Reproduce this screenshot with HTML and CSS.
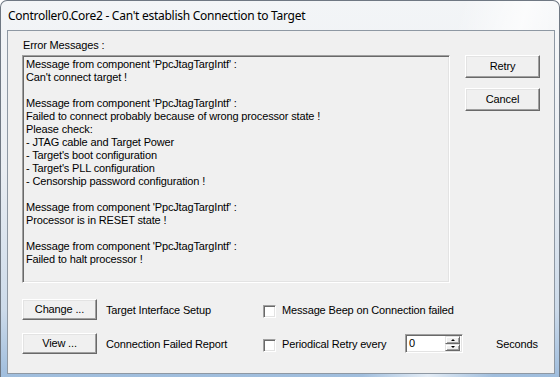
FILE: index.html
```html
<!DOCTYPE html>
<html>
<head>
<meta charset="utf-8">
<link rel="stylesheet" href="styles.css">
</head>
<body>
<div class="window">
  <div class="titlebar">Controller0.Core2 - Can't establish Connection to Target</div>
  <div class="client">
    <div class="top">
      <div class="msgcol">
        <div class="label">Error Messages :</div>
        <div class="msgbox">
          <div class="line">Message from component 'PpcJtagTargIntf' :</div>
          <div class="line">Can't connect target !</div>
          <div class="line">&nbsp;</div>
          <div class="line">Message from component 'PpcJtagTargIntf' :</div>
          <div class="line">Failed to connect probably because of wrong processor state !</div>
          <div class="line">Please check:</div>
          <div class="line">- JTAG cable and Target Power</div>
          <div class="line">- Target's boot configuration</div>
          <div class="line">- Target's PLL configuration</div>
          <div class="line">- Censorship password configuration !</div>
          <div class="line">&nbsp;</div>
          <div class="line">Message from component 'PpcJtagTargIntf' :</div>
          <div class="line">Processor is in RESET state !</div>
          <div class="line">&nbsp;</div>
          <div class="line">Message from component 'PpcJtagTargIntf' :</div>
          <div class="line">Failed to halt processor !</div>
        </div>
      </div>
      <div class="btncol">
        <div class="btn btn-main">Retry</div>
        <div class="btn btn-main">Cancel</div>
      </div>
    </div>
    <div class="opts">
      <div class="btn btn-small">Change ...</div>
      <div class="opt-label">Target Interface Setup</div>
      <div class="check"></div>
      <div class="opt-label">Message Beep on Connection failed</div>
      <div></div>
      <div></div>

      <div class="btn btn-small">View ...</div>
      <div class="opt-label">Connection Failed Report</div>
      <div class="check"></div>
      <div class="opt-label">Periodical Retry every</div>
      <div class="spin">
        <div class="spin-edit">0</div>
        <div class="spin-btns">
          <div class="spin-btn"><span class="arr-up"></span></div>
          <div class="spin-btn"><span class="arr-down"></span></div>
        </div>
      </div>
      <div class="opt-label seconds">Seconds</div>
    </div>
  </div>
</div>
</body>
</html>
```

FILE: styles.css
```css
html, body {
  margin: 0;
  padding: 0;
  width: 560px;
  height: 377px;
  overflow: hidden;
  background: #ffffff;
}

.window {
  box-sizing: border-box;
  width: 560px;
  height: 377px;
  border: 1px solid #6f7883;
  border-bottom: none;
  border-radius: 7px 7px 0 0;
  padding: 0 4px 0 6px;
  background:
    linear-gradient(105deg, rgba(255,255,255,0) 70%, rgba(255,255,255,0.7) 80%, rgba(255,255,255,0) 90%),
    linear-gradient(to bottom, #f3f5f7 0%, #e9edf2 45%, #cddbea 82%, #9fbddd 100%);
  display: flex;
  flex-direction: column;
}

.titlebar {
  height: 29px;
  box-sizing: border-box;
  padding: 7px 0 0 1px;
  font-family: "Noto Sans", "Open Sans", sans-serif;
  font-size: 12px;
  line-height: 16px;
  letter-spacing: -0.27px;
  color: #000;
  white-space: nowrap;
}

.client {
  box-sizing: border-box;
  width: 548px;
  height: 344px;
  border: 1px solid #8e98a3;
  background: #f0f0f0;
  padding: 8px 0 0 14px;
  font-family: "Liberation Sans", Arial, sans-serif;
  font-size: 11px;
  line-height: 13px;
  letter-spacing: -0.15px;
  color: #000;
}

.top {
  display: flex;
  gap: 15px;
}

.label {
  padding-left: 1px;
  height: 13px;
  margin-bottom: 3px;
}

.msgbox {
  box-sizing: border-box;
  width: 428px;
  height: 228px;
  border-style: solid;
  border-width: 1px;
  border-color: #a0a0a0 #ffffff #ffffff #a0a0a0;
  box-shadow: inset 1px 1px 0 #696969, inset -1px -1px 0 #e3e3e3;
  padding: 2px 0 0 3px;
  background: #f0f0f0;
  white-space: nowrap;
}

.line {
  height: 13px;
}

.btncol {
  display: flex;
  flex-direction: column;
  gap: 10px;
  padding-top: 16px;
}

.btn {
  box-sizing: border-box;
  display: flex;
  align-items: center;
  justify-content: center;
  background: #f0f0f0;
  border-style: solid;
  border-width: 1px;
  border-color: #ffffff #696969 #696969 #ffffff;
  box-shadow: inset -1px -1px 0 #a0a0a0, inset 1px 1px 0 #e3e3e3;
  padding-bottom: 1px;
}

.btn-main {
  width: 75px;
  height: 23px;
}

.btn-small {
  width: 75px;
  height: 21px;
}

.opts {
  margin-top: 16px;
  display: grid;
  grid-template-columns: 84px 157px 19px 123px 91px 1fr;
  grid-template-rows: 21px 21px;
  row-gap: 13px;
  align-items: center;
}

.opt-label {
  white-space: nowrap;
  padding-top: 2px;
}

.check {
  box-sizing: border-box;
  width: 13px;
  height: 13px;
  border-style: solid;
  border-width: 1px;
  border-color: #a0a0a0 #ffffff #ffffff #a0a0a0;
  box-shadow: inset 1px 1px 0 #696969, inset -1px -1px 0 #e3e3e3;
  background: #ffffff;
  margin-top: 3px;
}

.spin {
  box-sizing: border-box;
  width: 58px;
  height: 19px;
  display: flex;
  border-style: solid;
  border-width: 1px;
  border-color: #a0a0a0 #ffffff #ffffff #a0a0a0;
  box-shadow: inset 1px 1px 0 #696969, inset -1px -1px 0 #e3e3e3;
  background: #ffffff;
  padding: 2px 2px 1px 2px;
}

.spin-edit {
  flex: 1;
  line-height: 13px;
  padding-left: 1px;
}

.spin-btns {
  display: flex;
  flex-direction: column;
  width: 15px;
  margin-top: -1px;
}

.spin-btn {
  box-sizing: border-box;
  flex: 1;
  background: #f0f0f0;
  border-style: solid;
  border-width: 1px;
  border-color: #e3e3e3 #696969 #696969 #e3e3e3;
  box-shadow: inset 1px 1px 0 #ffffff, inset -1px -1px 0 #a0a0a0;
  display: flex;
  align-items: center;
  justify-content: center;
}

.arr-up {
  width: 0;
  height: 0;
  border-left: 2px solid transparent;
  border-right: 2px solid transparent;
  border-bottom: 2px solid #000;
}

.arr-down {
  width: 0;
  height: 0;
  border-left: 2px solid transparent;
  border-right: 2px solid transparent;
  border-top: 2px solid #000;
}

.seconds {
  padding-left: 0;
}
```
